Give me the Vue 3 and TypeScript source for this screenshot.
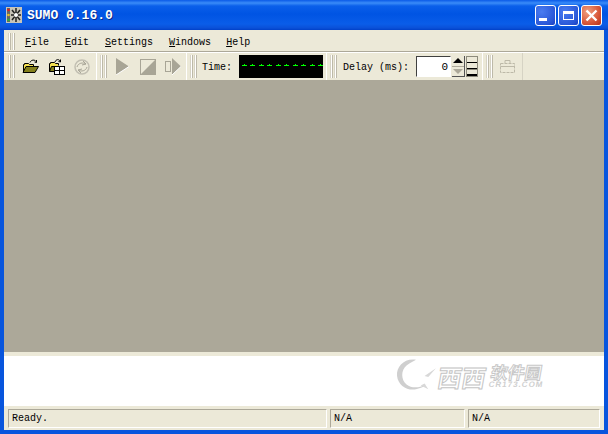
<script setup lang="ts">
const menus: { hot: string; rest: string }[] = [
  { hot: 'F', rest: 'ile' },
  { hot: 'E', rest: 'dit' },
  { hot: 'S', rest: 'ettings' },
  { hot: 'W', rest: 'indows' },
  { hot: 'H', rest: 'elp' },
]
const panels: { text: string; cls: string }[] = [
  { text: 'Ready.', cls: 'p1' },
  { text: 'N/A', cls: 'p2' },
  { text: 'N/A', cls: 'p3' },
]
</script>

<template>
  <div class="window">
    <header class="titlebar">
      <svg class="appicon" width="16" height="16" viewBox="0 0 16 16">
        <rect x="0" y="0" width="16" height="16" fill="#c8c4b8" />
        <rect x="1" y="1" width="3" height="14" fill="#666" />
        <circle cx="2.500" cy="3" r="1.300" fill="#e02020" />
        <circle cx="2.500" cy="8" r="1.300" fill="#e8c020" />
        <circle cx="2.500" cy="13" r="1.300" fill="#30b030" />
        <path d="M10 1v14M5 8h10M6 3l8 10M14 3l-8 10" stroke="#222" stroke-width="1.500" />
        <circle cx="10" cy="8" r="2" fill="#fff" />
      </svg>
      <span class="title">SUMO 0.16.0</span>
      <div class="winbtns">
        <button class="wb blue" aria-label="Minimize"><i class="min"></i></button>
        <button class="wb blue" aria-label="Maximize"><i class="max"></i></button>
        <button class="wb red" aria-label="Close">
          <svg width="13" height="13" viewBox="0 0 13 13"><path d="M1.500 1.500l10 10M11.500 1.500l-10 10" stroke="#fff" stroke-width="2.400" /></svg>
        </button>
      </div>
    </header>

    <div class="client">
      <nav class="menubar">
        <span class="grip"></span>
        <span v-for="m in menus" :key="m.hot" class="menu"><u>{{ m.hot }}</u>{{ m.rest }}</span>
      </nav>

      <div class="toolbars">
        <div class="tb tb1">
          <span class="grip"></span>
          <svg class="ic open" width="17" height="15" viewBox="0 0 17 15">
            <path d="M1.500 13.500V5.500h1v-1h4l1 1h4v2" fill="#f4e050" stroke="#000" />
            <path d="M1 13.500l3-6h12.500l-3.500 6z" fill="#84801c" stroke="#000" />
            <path d="M8 3.500c1-3 5-3 6-1M14.500 3.500l-2-.5M14.500 3.500V1" fill="none" stroke="#000" />
          </svg>
          <svg class="ic second" width="17" height="16" viewBox="0 0 17 16">
            <path d="M1.500 12.500V4.500h1v-1h4l1 1h3v2" fill="#f4e050" stroke="#000" />
            <path d="M1.500 12.500l2-5h6v5z" fill="#84801c" stroke="#000" />
            <path d="M7 3c1-3 4-3 5-1M12.500 3l-2-.5M12.500 3V.5" fill="none" stroke="#000" />
            <rect x="6.500" y="7.500" width="10" height="8" fill="#fff" stroke="#000" />
            <path d="M11.500 7.500v8M6.500 11.500h10" stroke="#000" />
          </svg>
          <svg class="ic third" width="16" height="16" viewBox="0 0 16 16">
            <circle cx="8" cy="8" r="7" fill="none" stroke="#c2bfb2" stroke-width="1.500" />
            <path d="M3 8c1-4 6-5 9-3M13 8c-1 4-6 5-9 3M9 2l3 3-4 1M7 14l-3-3 4-1" fill="none" stroke="#a8a597" />
          </svg>
        </div>
        <div class="tb tb2">
          <span class="grip"></span>
          <svg class="ic play" width="13" height="17" viewBox="0 0 13 17">
            <path d="M0 0l13 8.500L0 17z" fill="#a8a596" />
            <path d="M0 17l13-8.500" stroke="#fff" />
          </svg>
          <svg class="ic stop" width="16" height="16" viewBox="0 0 16 16">
            <rect x="0.500" y="0.500" width="15" height="15" fill="#ece9d8" stroke="#a8a596" />
            <path d="M1 15L15 1v14z" fill="#a8a596" />
          </svg>
          <svg class="ic step" width="16" height="17" viewBox="0 0 16 17">
            <rect x="0.500" y="3.500" width="5" height="10" fill="#ece9d8" stroke="#a8a596" />
            <path d="M7 0l9 8.500L7 17z" fill="#a8a596" />
            <path d="M7 17l9-8.500" stroke="#fff" />
          </svg>
        </div>
        <div class="tb tb3">
          <span class="grip"></span>
          <span class="label">Time:</span>
          <div class="lcd"><i v-for="n in 10" :key="n"></i></div>
        </div>
        <div class="tb tb4">
          <span class="grip"></span>
          <span class="label">Delay (ms):</span>
          <div class="spinbox">0</div>
          <div class="spinner">
            <span class="up"></span>
            <span class="down"></span>
          </div>
          <div class="levels"><i></i><i></i><i class="heavy"></i></div>
        </div>
        <div class="tb tb5">
          <span class="grip"></span>
          <svg class="ic case" width="15" height="13" viewBox="0 0 15 13">
            <rect x="0.500" y="3.500" width="14" height="9" fill="none" stroke="#bdb9a8" stroke-dasharray="3 1" />
            <path d="M0.500 6.500h14M5 3V0.500h5V3" fill="none" stroke="#bdb9a8" />
          </svg>
        </div>
      </div>

      <main class="mdi"></main>

      <section class="log">
        <div class="mark">
          <svg width="44" height="36" viewBox="0 0 46 38">
            <path d="M23 3C11 1 2 10 3 20c1 10 11 16 20 14 5-1 9-3 11-5-6 3-15 5-21 0C7 24 7 14 13 9c4-3 8-5 10-6z" fill="#cfcfcf" />
            <path d="M28 30l8 4-4-6zM32 20l12-8-8 9z" fill="#d8d8d8" />
          </svg>
          <div class="mark-text">
            <span class="big">西西</span>
            <span class="small-col"><span class="cn">软件园</span><span class="en">CR173.COM</span></span>
          </div>
        </div>
      </section>

      <footer class="statusbar">
        <span v-for="(p, i) in panels" :key="i" class="panel" :class="p.cls">{{ p.text }}</span>
      </footer>
    </div>
  </div>
</template>

<style>
html, body { margin: 0; padding: 0; background: #0855dd; }
</style>

<style scoped>
.window {
  width: 608px; height: 434px; box-sizing: border-box;
  display: flex; flex-direction: column; overflow: hidden;
  background: #0855dd;
  font-family: "Liberation Mono", monospace; font-size: 10px; color: #000;
}
.titlebar {
  height: 30px; flex: none; display: flex; align-items: center; box-sizing: border-box;
  padding: 0 6px 0 6px;
  background: linear-gradient(#0a5ae8 0, #3a8cf8 3px, #0a5fea 6px, #0054e3 14px, #0a5de8 24px, #0a50d8 28px, #0040c8 30px);
}
.appicon { flex: none; }
.title { margin-left: 5px; color: #fff; font-weight: 700; font-size: 13px; text-shadow: 1px 1px 0 #0a2a8a; }
.winbtns { margin-left: auto; display: flex; gap: 2px; padding-top: 1px; }
.wb {
  width: 21px; height: 21px; padding: 0; box-sizing: border-box; border: 1px solid #fff; border-radius: 3px;
  display: flex; align-items: center; justify-content: center;
}
.blue { background: radial-gradient(circle at 30% 30%, #4a7cf0, #2a58d8 70%, #1a3fc0); }
.red { background: radial-gradient(circle at 30% 30%, #f0a080, #d8583a 60%, #b83018); }
.min { display: block; width: 8px; height: 3px; background: #fff; margin: 8px 6px 0 0; }
.max { display: block; width: 11px; height: 9px; box-sizing: border-box; border: 1px solid #fff; border-top-width: 3px; }

.client { flex: 1; min-height: 0; display: flex; flex-direction: column; margin: 0 4px 4px; background: #ece9d8; }
.grip {
  flex: none; width: 7px; height: 17px;
  background: linear-gradient(90deg, #d6d3c4 0 1px, #fff 1px 2px, #bdb9a9 2px 3px, #ece9d8 3px 4px, #d6d3c4 4px 5px, #fff 5px 6px, #bdb9a9 6px 7px);
}
.menubar {
  height: 22px; flex: none; box-sizing: border-box; display: flex; align-items: center;
  border-bottom: 1px solid #aca899; box-shadow: 0 1px 0 #fff; padding-left: 4px; padding-top: 1px;
}
.menu { margin-left: 16px; padding-top: 2px; }
.grip + .menu { margin-left: 10px; }
.menu:last-child { margin-left: 15px; }

.toolbars { height: 28px; flex: none; display: flex; box-sizing: border-box; padding-top: 1px; }
.tb { display: flex; align-items: center; box-sizing: border-box; border-right: 1px solid #fff; padding-left: 3px; height: 27px; flex: none; }
.tb .grip { height: 23px; }
.tb1 { width: 93px; padding-left: 4px; }
.tb2 { width: 90px; }
.tb3 { width: 140px; }
.tb4 { width: 156px; }
.tb5 { width: 40px; border-right: 1px solid #d6d3c4; }
.ic { flex: none; }
.open { margin-left: 7px; }
.second { margin-left: 9px; }
.third { margin-left: 9px; }
.play { margin-left: 9px; }
.stop { margin-left: 11px; }
.step { margin-left: 9px; }
.label { padding-top: 1px; }
.tb3 .label { margin-left: 5px; }
.lcd {
  width: 84px; height: 23px; margin-left: 7px; background: #000; flex: none; display: flex; align-items: center;
  box-sizing: border-box; padding: 0 3px 2px;
}
.lcd i { display: block; flex: none; position: relative; width: 5px; height: 1px; margin-right: 3px; background: #00ff00; }
.lcd i:nth-child(even) { margin-right: 4px; }
.lcd i::before { content: ""; position: absolute; left: 2px; top: -1px; width: 1px; height: 1px; background: #00ff00; }
.tb4 .label { margin-left: 6px; }
.spinbox {
  width: 35px; height: 21px; margin-left: 7px; flex: none; box-sizing: border-box; background: #fff;
  border: 1px solid; border-color: #404040 #fff #fff #404040; text-align: right; padding-right: 2px; line-height: 20px; font-size: 11px;
}
.spinner { width: 13px; height: 21px; margin-left: 1px; flex: none; display: flex; flex-direction: column; border-right: 1px solid #555; border-bottom: 1px solid #555; box-sizing: border-box; }
.up, .down { flex: 1; display: flex; align-items: center; justify-content: center; }
.up { border-bottom: 1px solid #aca899; }
.up::before { content: ""; border: 5px solid transparent; border-top: 0; border-bottom: 5px solid #000; }
.down::before { content: ""; border: 5px solid transparent; border-bottom: 0; border-top: 5px solid #aca899; }
.levels { width: 12px; height: 21px; margin-left: 1px; flex: none; box-sizing: border-box; background: #8c8a7c; padding: 1px; display: flex; flex-direction: column; justify-content: space-around; }
.levels i { display: block; height: 6px; background: #ece9d8; border-bottom: 1px solid #000; box-sizing: border-box; }
.levels .heavy { border-bottom-width: 2px; }
.case { margin-left: 7px; }

.mdi { flex: 1; min-height: 0; background: #aca899; }
.log { height: 54px; flex: none; box-sizing: border-box; background: #fff; border-top: 4px solid #ece9d8; display: flex; justify-content: flex-end; }
.mark { display: flex; align-items: flex-start; margin: 1px 59px 0 0; height: 42px; }
.mark-text { display: flex; align-items: flex-start; margin-top: 6px; font-family: "Noto Sans CJK SC", sans-serif; font-weight: 700; color: #fff; transform: skewX(-10deg); }
.big { font-size: 24px; line-height: 28px; letter-spacing: 0; -webkit-text-stroke: 1px #c4c4c4; }
.small-col { display: flex; flex-direction: column; margin-left: 4px; }
.cn { font-size: 17px; line-height: 17px; color: #fff; -webkit-text-stroke: 1px #c8c8c8; }
.en { font-family: "Liberation Sans", sans-serif; font-size: 8px; line-height: 9px; letter-spacing: 1px; color: #cfcfcf; }

.statusbar { height: 24px; flex: none; box-sizing: border-box; display: flex; gap: 3px; padding: 2px 4px; }
.panel {
  box-sizing: border-box; height: 19px; line-height: 17px; padding-left: 3px; margin-top: 1px;
  border: 1px solid; border-color: #aca899 #fff #fff #aca899; white-space: pre;
}
.p1 { width: 319px; }
.p2 { width: 135px; }
.p3 { width: 132px; }
</style>
